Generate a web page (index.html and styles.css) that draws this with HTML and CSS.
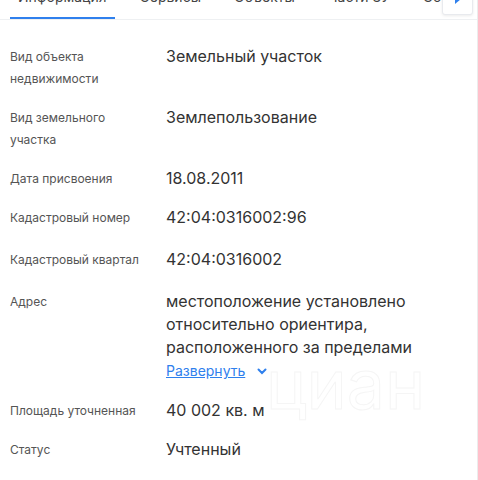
FILE: index.html
```html
<!DOCTYPE html>
<html lang="ru">
<head>
    <meta charset="UTF-8">
    <meta name="viewport" content="width=device-width, initial-scale=1.0">
    <title>Информация об объекте</title>
    <link rel="stylesheet" href="styles.css">
</head>
<body>
    <div class="panel">
        <div class="tabs-wrap">
            <div class="tabs">
                <span class="tab tab-active">Информация</span>
                <span class="tab">Сервисы</span>
                <span class="tab">Объекты</span>
                <span class="tab">Части ЗУ</span>
                <span class="tab">Состав</span>
            </div>
            <button class="tabs-next" aria-label="Дальше">
                <svg width="8" height="10" viewBox="0 0 8 10"><path d="M1 0 L7 5 L1 10 Z" fill="#2f80ed"/></svg>
            </button>
        </div>

        <div class="info">
            <div class="row">
                <div class="label">Вид объекта<br>недвижимости</div>
                <div class="value">Земельный участок</div>
            </div>
            <div class="row">
                <div class="label">Вид земельного<br>участка</div>
                <div class="value">Землепользование</div>
            </div>
            <div class="row">
                <div class="label">Дата присвоения</div>
                <div class="value">18.08.2011</div>
            </div>
            <div class="row row-loose">
                <div class="label">Кадастровый номер</div>
                <div class="value">42:04:0316002:96</div>
            </div>
            <div class="row row-loose">
                <div class="label">Кадастровый квартал</div>
                <div class="value">42:04:0316002</div>
            </div>
            <div class="row">
                <div class="label">Адрес</div>
                <div class="value">
                    местоположение установлено<br>относительно ориентира,<br>расположенного за пределами
                    <a class="more" href="#">Развернуть
                        <svg width="10" height="7" viewBox="0 0 10 7"><path d="M1.5 1.5 L5 5 L8.5 1.5" fill="none" stroke="#2f80ed" stroke-width="2" stroke-linecap="round"/></svg>
                    </a>
                </div>
            </div>
            <div class="row">
                <div class="label">Площадь уточненная</div>
                <div class="value">40 002 кв. м</div>
            </div>
            <div class="row">
                <div class="label">Статус</div>
                <div class="value">Учтенный</div>
            </div>
            <div class="watermark">циан</div>
        </div>
    </div>
</body>
</html>
```

FILE: styles.css
```css
body {
    margin: 0;
    background-color: white;
    font-family: 'Inter', 'Noto Sans', sans-serif;
    color: #333;
    overflow: hidden;
}

.panel {
    width: 477px;
    height: 480px;
    border-right: 1px solid #ececec;
    position: relative;
    overflow: hidden;
}

.tabs-wrap {
    position: relative;
    margin-top: -12px;
    border-bottom: 1px solid #eef0f2;
}

.tabs {
    display: flex;
    gap: 17px;
    padding-left: 10px;
    white-space: nowrap;
}

.tab {
    font-size: 14px;
    line-height: 18px;
    padding: 0 8px 11px;
    color: #444;
    border-bottom: 2px solid transparent;
}

.tab-active {
    border-bottom-color: #2f80ed;
}

.tabs-next {
    position: absolute;
    left: 442px;
    top: -5px;
    width: 31px;
    height: 32px;
    background: white;
    border: 1px solid #e8eaee;
    border-radius: 3px;
    box-shadow: 0 1px 3px rgba(0, 0, 0, 0.08);
    padding: 0;
    display: flex;
    align-items: center;
    justify-content: center;
}

.info {
    position: relative;
    padding: 25px 0 0 10px;
}

.row {
    display: grid;
    grid-template-columns: 156px 1fr;
    margin-bottom: 16px;
}

/* кадастровые строки чуть свободнее */
.row-loose {
    margin-bottom: 19px;
}

.label {
    font-size: 12px;
    line-height: 22px;
    color: #555;
    padding-top: 1px;
}

.value {
    font-size: 16px;
    line-height: 23px;
    color: #333;
}

.more {
    display: flex;
    align-items: center;
    gap: 12px;
    font-size: 14px;
    line-height: 24px;
    color: #2f80ed;
    text-decoration: underline;
}

.watermark {
    position: absolute;
    left: 266px;
    top: 330px;
    font-size: 68px;
    line-height: 1;
    color: transparent;
    -webkit-text-stroke: 1px #f5f5f5;
    pointer-events: none;
}
```
